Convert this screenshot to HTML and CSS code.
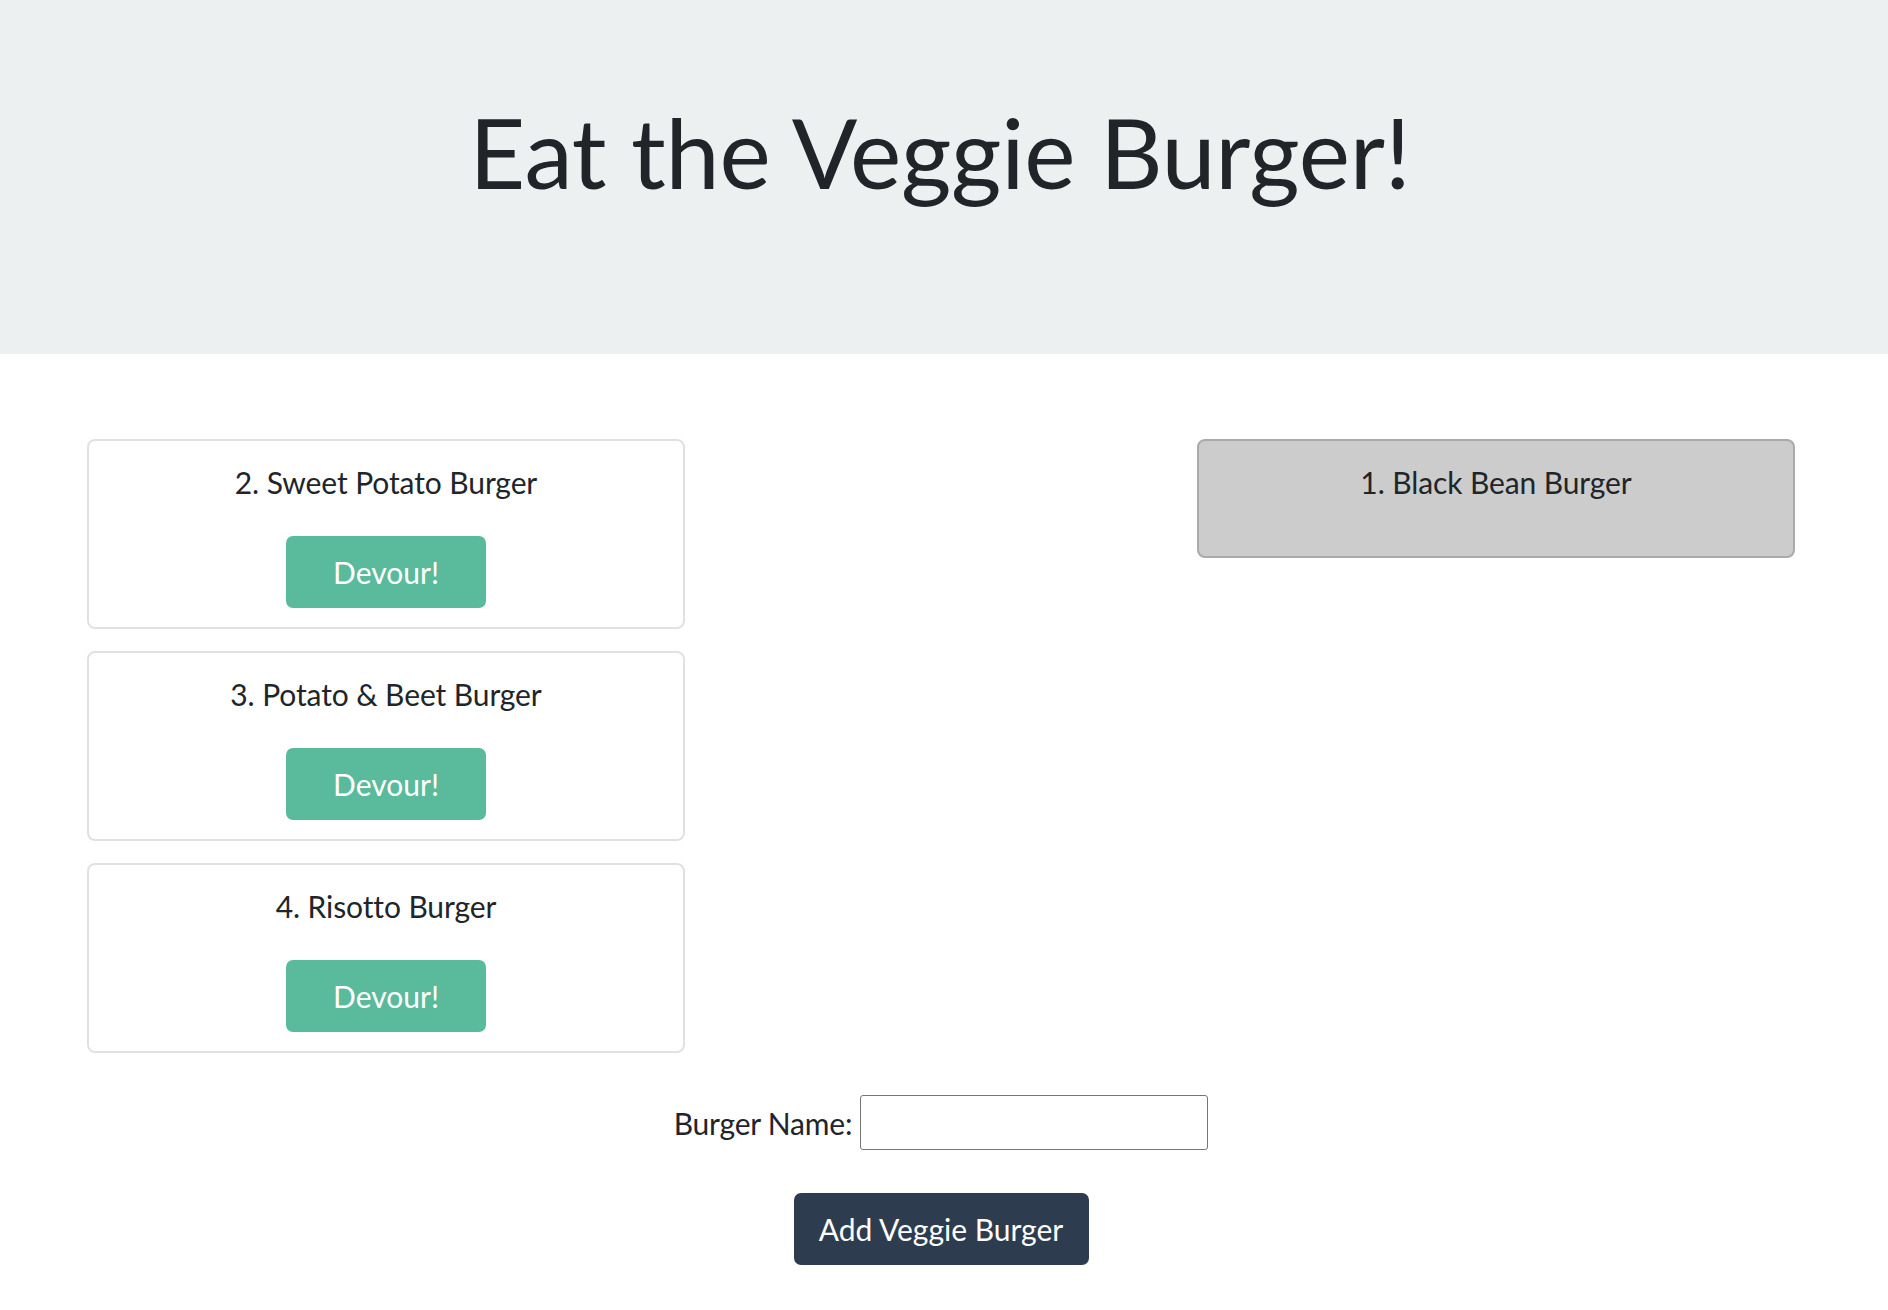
FILE: index.html
```html
<!DOCTYPE html>
<html lang="en">
<head>
<meta charset="utf-8">
<title>Eat the Veggie Burger!</title>
<link rel="stylesheet" href="styles.css">
</head>
<body>
<header class="jumbotron">
  <h1 class="title">Eat the Veggie Burger!</h1>
</header>
<main class="main">
  <div class="columns">
    <section class="col">
      <div class="card">
        <p class="card-name">2. Sweet Potato Burger</p>
        <button class="btn-devour">Devour!</button>
      </div>
      <div class="card">
        <p class="card-name">3. Potato &amp; Beet Burger</p>
        <button class="btn-devour">Devour!</button>
      </div>
      <div class="card">
        <p class="card-name">4. Risotto Burger</p>
        <button class="btn-devour">Devour!</button>
      </div>
    </section>
    <section class="col">
      <div class="card card-eaten">
        <p class="card-name">1. Black Bean Burger</p>
      </div>
    </section>
  </div>
  <form class="add-form">
    <div class="field">
      <label class="label" for="burger">Burger Name:</label>
      <input class="input" id="burger" type="text">
    </div>
    <button class="btn-add" type="button">Add Veggie Burger</button>
  </form>
</main>
</body>
</html>
```
FILE: styles.css
```css
* { box-sizing: border-box; }
html, body { margin: 0; padding: 0; }
body {
  font-family: Lato, "Open Sans", "Liberation Sans", sans-serif;
  color: #212529;
  background: #fff;
}
.jumbotron {
  background: #ecf0f1;
  height: 354px;
  display: flex;
  justify-content: center;
  padding-top: 94px;
}
.title {
  margin: 0 8px 0 0;
  font-size: 97px;
  font-weight: 400;
  line-height: 1.2;
  letter-spacing: -0.2px;
  height: 117px;
}
.main {
  padding: 85px 93px 40px 87px;
}
.columns {
  display: flex;
  justify-content: space-between;
}
.col {
  width: 598px;
  display: flex;
  flex-direction: column;
  gap: 22px;
}
.card {
  border: 2px solid #e1e1e1;
  border-radius: 8px;
  height: 190px;
  padding-top: 20px;
  display: flex;
  flex-direction: column;
  align-items: center;
}
.card-eaten {
  background: #cccccc;
  border-color: #aaaaaa;
  height: 119px;
}
.card-name {
  margin: 0;
  font-size: 30px;
  line-height: 42px;
  letter-spacing: -0.1px;
}
.btn-devour {
  margin-top: 33px;
  width: 200px;
  height: 72px;
  border: 0;
  border-radius: 7px;
  background: #5aba9c;
  color: #fff;
  font-family: inherit;
  font-size: 30px;
  padding: 0;
}
.add-form {
  margin-top: 42px;
  display: flex;
  flex-direction: column;
  align-items: center;
  gap: 43px;
}
.field {
  display: flex;
  align-items: center;
  gap: 8px;
}
.label {
  font-size: 30px;
  letter-spacing: -0.2px;
}
.input {
  width: 348px;
  height: 55px;
  border: 1.5px solid #767676;
  border-radius: 3px;
  font-size: 24px;
}
.btn-add {
  width: 295px;
  height: 72px;
  border: 0;
  border-radius: 7px;
  background: #2e3c4f;
  color: #fff;
  font-family: inherit;
  font-size: 30px;
  padding: 0;
}
```
